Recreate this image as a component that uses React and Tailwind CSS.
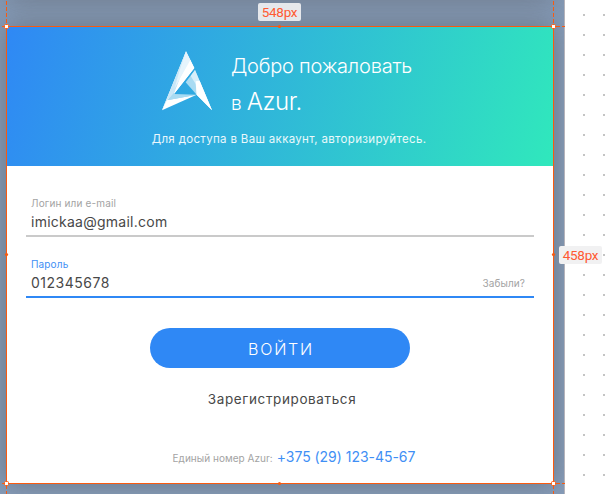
function Logo() {
  return (
    <svg className="h-[60px] w-[52px]" viewBox="9 9 156 180">
      <path d="M84 10 109 60 48 138 34 150 12 187Z" fill="#fff" />
      <path d="M84 10 72 75 48 138 30 153 12 187Z" fill="#c9e7f7" />
      <path d="M84 10 98 38 66 92 50 120 64 70Z" fill="#e6f4fc" />
      <path d="M97 36 109 60 48 138 66 92Z" fill="#fff" />
      <path d="M48 134 48 138 116 140 28 157Z" fill="#a9dbf2" />
      <path d="M116 140 27 157 12 187Z" fill="#fff" />
      <path d="M111 66 83 103 116 140 162 187Z" fill="#a9dbf2" />
      <path d="M111 66 98 84 113 108 116 140 162 187Z" fill="#d7effa" />
      <path d="M113 100 116 140 162 187 125 98Z" fill="#fff" />
    </svg>
  );
}

function Field({ label, value, valueClass, active, action }) {
  return (
    <div
      className={`flex h-[41px] w-[508px] flex-col border-b-2 pl-[5px] ${
        active ? "border-[#2f88f5]" : "border-[#cacaca]"
      }`}
    >
      <span className={`text-[10px] leading-[14px] tracking-[0.15px] ${active ? "text-[#3f8ff5]" : "text-[#a3a3a3]"}`}>
        {label}
      </span>
      <div className="flex items-center justify-between pr-[9px]">
        <span className={`pt-px text-[14px] leading-[22px] text-[#484848] ${valueClass}`}>{value}</span>
        {action && <span className="text-[10px] leading-[22px] tracking-[0.1px] text-[#a3a3a3]">{action}</span>}
      </div>
    </div>
  );
}

/* Resize outline of the selected frame: guides, corner handles and edge midpoints */
function Selection() {
  return (
    <svg className="pointer-events-none absolute inset-0 h-full w-full">
      <g fill="none" stroke="#f95a10">
        <rect x="6.5" y="26.5" width="547" height="457" />
        <path d="M6.5 1V26M553.5 1V26M6.5 485V494M553.5 485V494M556 26.5H565M556 483.5H565" strokeDasharray="4 2" />
        <path d="M2 26.5H6M2 483.5H6" />
      </g>
      <g fill="#fff" stroke="#fd5c10">
        <rect x="4.5" y="24.5" width="4" height="4" rx="1" />
        <rect x="551.5" y="24.5" width="4" height="4" rx="1" />
        <rect x="4.5" y="481.5" width="4" height="4" rx="1" />
        <rect x="551.5" y="481.5" width="4" height="4" rx="1" />
      </g>
      <g fill="#f95a10">
        <circle cx="279.5" cy="26.5" r="1.6" />
        <circle cx="279.5" cy="483.5" r="1.6" />
        <circle cx="6.5" cy="254.5" r="1.6" />
        <circle cx="553.5" cy="254.5" r="1.6" />
      </g>
    </svg>
  );
}

export default function App() {
  return (
    <div className="relative flex h-[494px] w-[606px] overflow-hidden bg-white font-['Inter',sans-serif]">
      <div className="flex w-[565px] shrink-0 flex-col overflow-hidden border-r border-[#b5b3ba] bg-[#869cb9] pl-[6px]">
        <div className="-mt-[21px] mb-[27px] h-[20px] w-[548px] shrink-0 shadow-[0_2px_30px_rgba(80,80,80,0.55)]" />
        <main className="flex h-[458px] w-[548px] shrink-0 flex-col overflow-hidden rounded-[5px] bg-white shadow-[0_0_25px_rgba(80,80,80,0.5)]">
          <header className="h-[140px] shrink-0 bg-[linear-gradient(106deg,#2f88f5_0%,#30e8bc_100%)] text-white">
            <div className="flex pt-[25px] pl-[155px]">
              <Logo />
              <h1 className="pl-[18px] font-light">
                <span className="block text-[20px] leading-[31px] tracking-[-0.22px]">Добро пожаловать</span>
                <span className="flex items-baseline gap-[5px] pt-px leading-[38px]">
                  <span className="text-[19px]">в</span>
                  <span className="text-[24px] tracking-[-0.4px]">Azur.</span>
                </span>
              </h1>
            </div>
            <p className="pl-[18px] text-center text-[11.5px] leading-[32px] tracking-[0.33px] text-white/90">
              Для доступа в Ваш аккаунт, авторизируйтесь.
            </p>
          </header>
          <form className="flex flex-col items-center gap-[20px] pt-[30px]">
            <Field label="Логин или e-mail" value="imickaa@gmail.com" valueClass="tracking-[0.25px]" />
            <Field label="Пароль" value="012345678" valueClass="tracking-[0.5px]" active action="Забыли?" />
          </form>
          <div className="flex flex-col items-center pt-[30px]">
            <button className="h-[40px] w-[260px] rounded-full bg-[#2f88f5] pt-[2px] pl-[2px] text-[16px] leading-[24px] font-light tracking-[1.8px] text-white">
              ВОЙТИ
            </button>
            <a className="pt-[21px] pl-[4px] text-[13.5px] leading-[20px] tracking-[0.62px] text-[#484848]">
              Зарегистрироваться
            </a>
            <div className="flex items-baseline gap-[4px] pt-[38px] pl-[28px] leading-[20px]">
              <span className="text-[10px] tracking-[0.03px] text-[#a3a3a3]">Единый номер Azur:</span>
              <span className="text-[14px] tracking-[-0.03px] text-[#3f8ff5]">+375 (29) 123-45-67</span>
            </div>
          </div>
        </main>
      </div>
      <svg className="h-[494px] w-[41px] shrink-0">
        <defs>
          <pattern id="grid" width="20" height="20" patternUnits="userSpaceOnUse">
            <rect x="18" y="14" width="2" height="2" fill="#c4c4c4" />
          </pattern>
        </defs>
        <rect width="41" height="494" fill="url(#grid)" />
      </svg>
      <Selection />
      <div className="absolute top-[3px] left-[258px] h-[18px] w-[43px] rounded-[2px] bg-[#e6e8ec] text-center font-['Roboto',sans-serif] text-[13.5px] leading-[18px] tracking-[-0.3px] text-[#ff5a32]">
        548px
      </div>
      <div className="absolute top-[246px] left-[559px] h-[18px] w-[43px] rounded-[2px] bg-[#f1f1f2] text-center font-['Roboto',sans-serif] text-[13.5px] leading-[18px] tracking-[-0.3px] text-[#ff5a32]">
        458px
      </div>
    </div>
  );
}
